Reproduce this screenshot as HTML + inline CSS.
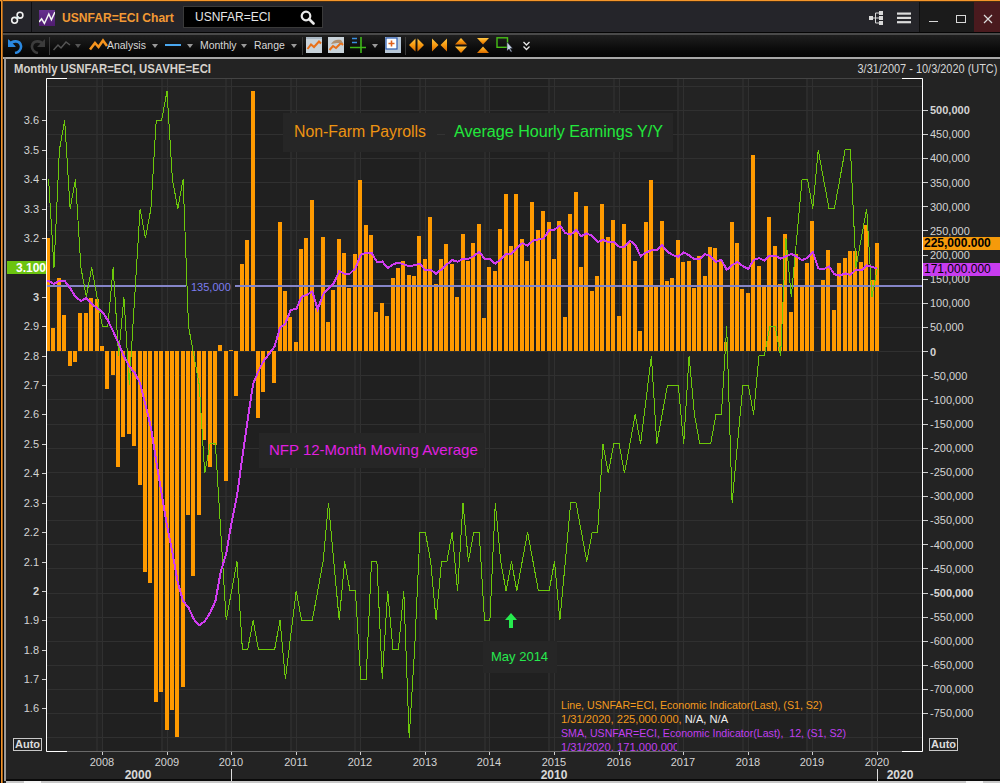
<!DOCTYPE html>
<html><head><meta charset="utf-8">
<style>
*{margin:0;padding:0;box-sizing:border-box}
html,body{width:1000px;height:783px;overflow:hidden;background:#232323;font-family:"Liberation Sans",sans-serif}
.a{position:absolute}
#ob-top{left:0;top:0;width:1000px;height:1px;background:#F5962A}
#ob-top2{left:0;top:1px;width:1000px;height:1px;background:#4a2f14}
#ob-left{left:1px;top:0;width:1px;height:783px;background:#F0922A}
#ob-left2{left:2px;top:0;width:1px;height:783px;background:#a0601c}
#ob-l0{left:0;top:0;width:1px;height:783px;background:#000}
#title{left:3px;top:2px;width:997px;height:30px;background:#25252a}
#tdiv{left:31px;top:2px;width:1px;height:30px;background:#0e0e10}
#wc{left:919px;top:2px;width:55px;height:30px;background:#1b1b1b;border-left:1px solid #0e0e0e}
#wclose{left:974px;top:2px;width:26px;height:30px;background:#4a1a1e}
#tline{left:3px;top:32px;width:997px;height:1px;background:#050505}
#tgray{left:3px;top:33px;width:997px;height:2px;background:#4a4a4a}
#toolbar{left:3px;top:35px;width:997px;height:22px;background:linear-gradient(#1f1f1f,#0c0c0c 60%,#040404)}
#tbot{left:3px;top:57px;width:997px;height:2px;background:#a8a8a8}
#panel{left:3px;top:59px;width:997px;height:722px;background:#232323}
#pl-gray{left:4px;top:57px;width:2px;height:724px;background:#9a9a9a}
#pl-blk{left:3px;top:59px;width:1px;height:724px;background:#000}
#scroll{left:6px;top:781px;width:994px;height:2px;background:#c8c8c8}
#scrollb{left:6px;top:779px;width:994px;height:2px;background:#0a0a0a}
.tt{color:#F39A34;font-weight:bold;font-size:13px;left:62px;top:10px;transform-origin:0 0;transform:scaleX(0.93);white-space:nowrap}
#search{left:183px;top:6px;width:140px;height:22px;background:#000;border:1px solid #3a3a3a}
.st{left:195px;top:10px;font-size:12px;color:#e6e6e6;white-space:nowrap}
.tb{font-size:11px;color:#d8d8d8;top:39px;transform-origin:0 0;transform:scaleX(0.95);white-space:nowrap}
.dd{width:0;height:0;border-left:3.5px solid transparent;border-right:3.5px solid transparent;border-top:4px solid #9a9a9a;top:44px}
.sep{width:1px;height:18px;top:37px;background:#3a3a3a}
.ll{position:absolute;right:961px;font-size:11px;color:#d4d4d4;text-align:right;white-space:nowrap}
.rl{position:absolute;left:930px;font-size:11px;color:#d4d4d4;white-space:nowrap}
.b{font-weight:bold}
.xl{position:absolute;top:756px;width:60px;text-align:center;font-size:11px;color:#d4d4d4}
.dec{position:absolute;top:768px;font-size:12px;font-weight:bold;color:#d8d8d8;width:60px;text-align:center}
.hdr{left:14px;top:62px;font-size:12px;font-weight:bold;color:#d6d2cc;transform-origin:0 0;transform:scaleX(0.945);white-space:nowrap}
.rng{right:3px;top:62px;font-size:12px;color:#d6d6d6;white-space:nowrap;transform-origin:100% 0;transform:scaleX(0.912)}
.auto{font-size:11px;font-weight:bold;color:#dcdcdc;border:1px solid #c8c8c8;padding:0 1px;line-height:11px;height:13px}
.lbox{background:#262626}
.leg{font-size:11px;white-space:nowrap;line-height:14px;transform-origin:0 0;transform:scaleX(0.966)}
</style></head><body>
<div class="a" id="panel"></div>
<div class="a" id="title"></div>
<div class="a" id="tdiv"></div>
<div class="a" id="wc"></div>
<div class="a" id="wclose"></div>
<div class="a" id="tline"></div>
<div class="a" id="tgray"></div>
<div class="a" id="toolbar"></div>
<div class="a" id="tbot"></div>
<div class="a" id="pl-blk"></div>
<div class="a" id="pl-gray"></div>
<div class="a" id="scrollb"></div>
<div class="a" id="scroll"></div>
<div class="a" style="left:24px;top:781px;width:17px;height:2px;background:#f4f4f4"></div>
<div class="a" style="left:966px;top:781px;width:17px;height:2px;background:#f4f4f4"></div>
<div class="a" id="ob-l0"></div>
<div class="a" id="ob-top"></div>
<div class="a" id="ob-top2"></div>
<div class="a" id="ob-left"></div>
<div class="a" id="ob-left2"></div>

<!-- title bar content -->
<svg class="a" style="left:10px;top:10px" width="16" height="16" viewBox="0 0 16 16">
 <g fill="none" stroke="#f2f2f2" stroke-width="1.6">
  <circle cx="4.6" cy="10.3" r="2.9"/><circle cx="10" cy="5.2" r="2.9"/>
 </g>
 <path d="M5.8 9L8.8 6.5" stroke="#d8ecec" stroke-width="1.6"/>
</svg>
<svg class="a" style="left:39px;top:10px" width="16" height="16" viewBox="0 0 16 16">
 <defs><linearGradient id="pg" x1="0" y1="0" x2="0" y2="1"><stop offset="0" stop-color="#66308f"/><stop offset="1" stop-color="#4f1c70"/></linearGradient></defs>
 <rect width="16" height="16" fill="url(#pg)"/>
 <path d="M0 12L2.6 8.9L5.4 13.5L9.8 4L12.4 9.8L16 2" fill="none" stroke="#f4f8f4" stroke-width="1.5"/>
</svg>
<div class="a tt">USNFAR=ECI Chart</div>
<div class="a" id="search"></div>
<div class="a st">USNFAR=ECI</div>
<svg class="a" style="left:300px;top:10px" width="15" height="15" viewBox="0 0 15 15">
 <circle cx="6" cy="6" r="4.3" fill="none" stroke="#e8e8e8" stroke-width="2.2"/>
 <path d="M9 9L13.5 13.5" stroke="#e8e8e8" stroke-width="2.6" stroke-linecap="round"/>
</svg>
<svg class="a" style="left:868px;top:10px" width="16" height="16" viewBox="0 0 16 16">
 <g fill="#d8d8d8"><rect x="1" y="6" width="4" height="4"/><rect x="11" y="1" width="4" height="4"/><rect x="11" y="6" width="4" height="4"/><rect x="11" y="11" width="4" height="4"/></g>
 <path d="M4 8H11M7.5 3V13M7.5 3H11M7.5 13H11" stroke="#d8d8d8" stroke-width="1" fill="none"/>
</svg>
<svg class="a" style="left:897px;top:12px" width="15" height="12" viewBox="0 0 15 12">
 <g fill="#dcdcdc"><rect x="0" y="0.5" width="14" height="2.2"/><rect x="0" y="4.8" width="14" height="2.2"/><rect x="0" y="9.1" width="14" height="2.2"/></g>
</svg>
<div class="a" style="left:929px;top:21px;width:9px;height:1px;background:#d8d8d8"></div>
<div class="a" style="left:956px;top:15px;width:10px;height:8px;border:1px solid #d8d8d8"></div>
<svg class="a" style="left:983px;top:14px" width="10" height="10" viewBox="0 0 10 10"><path d="M1 1L9 9M9 1L1 9" stroke="#dcdcdc" stroke-width="1.2"/></svg>

<!-- toolbar -->
<svg class="a" style="left:6px;top:37px" width="18" height="17" viewBox="0 0 18 17">
 <path d="M3 3V9H9" fill="#2a88e0"/>
 <path d="M4 8C6 3 14 3 15 9C15.5 13 12 15.5 9 16" fill="none" stroke="#2a88e0" stroke-width="2.6"/>
 <path d="M2 2L2 10L10 10Z" fill="#2a88e0"/>
</svg>
<svg class="a" style="left:29px;top:37px" width="18" height="17" viewBox="0 0 18 17">
 <path d="M14 8C12 3 4 3 3 9C2.5 13 6 15.5 9 16" fill="none" stroke="#3c3c3c" stroke-width="2.6"/>
 <path d="M16 2L16 10L8 10Z" fill="#3c3c3c"/>
</svg>
<div class="a sep" style="left:49px"></div>
<svg class="a" style="left:53px;top:39px" width="18" height="12" viewBox="0 0 18 12"><path d="M0.5 11L5 6L8 9L13 3L17 6" fill="none" stroke="#555" stroke-width="1.5"/></svg>
<div class="a dd" style="left:75px;border-top-color:#555"></div>
<svg class="a" style="left:89px;top:38px" width="19" height="13" viewBox="0 0 19 13"><path d="M1 11.5L6 5L9.5 9L14 2.5L18 8" fill="none" stroke="#F5941E" stroke-width="2.6"/></svg>
<div class="a tb" style="left:107px">Analysis</div>
<div class="a dd" style="left:152px"></div>
<div class="a" style="left:165px;top:44px;width:16px;height:2px;background:#4aa8f0"></div>
<div class="a dd" style="left:187px"></div>
<div class="a tb" style="left:200px">Monthly</div>
<div class="a dd" style="left:241px"></div>
<div class="a tb" style="left:254px">Range</div>
<div class="a dd" style="left:291px"></div>
<div class="a sep" style="left:302px"></div>
<svg class="a" style="left:306px;top:37px" width="17" height="16" viewBox="0 0 17 16">
 <rect x="0" y="0" width="16" height="16" fill="#c9d3da"/><rect x="0" y="0" width="16" height="2" fill="#aab8c4"/>
 <path d="M1.5 12L5 7.5L8 10L13 4.5L15 6.5" fill="none" stroke="#E8701A" stroke-width="2"/>
</svg>
<svg class="a" style="left:328px;top:37px" width="17" height="16" viewBox="0 0 17 16">
 <rect x="0" y="0" width="16" height="16" fill="#c9d3da"/>
 <path d="M1.5 13L5 9L8 11L13 6L15 8" fill="none" stroke="#E8701A" stroke-width="2"/>
 <path d="M3 7C5 3 9 2 13 3L15 6L9 6Z" fill="#b09070"/>
</svg>
<svg class="a" style="left:349px;top:37px" width="18" height="16" viewBox="0 0 18 16">
 <path d="M1 10.5H17M12 0V16" stroke="#3fb81a" stroke-width="1.6"/>
 <path d="M3 1.5H8M3 5.5H8" stroke="#3a8fe0" stroke-width="1.4"/>
</svg>
<div class="a dd" style="left:372px"></div>
<svg class="a" style="left:385px;top:37px" width="17" height="16" viewBox="0 0 17 16">
 <rect x="0" y="0" width="16" height="16" fill="#b8c8d8"/><rect x="1" y="1" width="11" height="11" fill="#fff" stroke="#2a5ab0" stroke-width="1.2"/>
 <path d="M6.5 3.5V9.5M3.5 6.5H9.5" stroke="#E0601A" stroke-width="1.6"/>
</svg>
<div class="a sep" style="left:405px"></div>
<svg class="a" style="left:0;top:0" width="0" height="0"><defs><linearGradient id="og" x1="0" y1="0" x2="0" y2="1"><stop offset="0" stop-color="#FFC848"/><stop offset="0.5" stop-color="#F89A10"/><stop offset="1" stop-color="#D86A00"/></linearGradient></defs></svg>
<svg class="a" style="left:408px;top:38px" width="17" height="14" viewBox="0 0 17 14"><path d="M1 7L7.5 0.5V13.5Z M16 7L9.5 0.5V13.5Z" fill="url(#og)"/></svg>
<svg class="a" style="left:431px;top:38px" width="17" height="14" viewBox="0 0 17 14"><path d="M7.5 7L1 0.5V13.5Z M9.5 7L16 0.5V13.5Z" fill="url(#og)"/></svg>
<svg class="a" style="left:454px;top:37px" width="14" height="17" viewBox="0 0 14 17"><path d="M7 1L13 7.5H1Z" fill="url(#og)"/><path d="M1 9.5H13L7 16Z" fill="url(#og)"/></svg>
<svg class="a" style="left:476px;top:37px" width="14" height="17" viewBox="0 0 14 17"><path d="M7 7.5L13 1H1Z" fill="url(#og)"/><path d="M7 9.5L13 16H1Z" fill="url(#og)"/></svg>
<svg class="a" style="left:496px;top:37px" width="17" height="16" viewBox="0 0 17 16">
 <rect x="1" y="0.8" width="10.5" height="9.5" fill="none" stroke="#48c018" stroke-width="1.4"/>
 <path d="M11 5V14L13 12L15 15L16 14.5L14.2 11.5L16.5 11.3Z" fill="#c8d8e8" stroke="#223" stroke-width="0.5"/>
</svg>
<svg class="a" style="left:523px;top:41px" width="7" height="10" viewBox="0 0 7 10"><path d="M0.5 1L3.5 4L6.5 1M0.5 5.5L3.5 8.5L6.5 5.5" fill="none" stroke="#e8e8e8" stroke-width="1.3"/></svg>

<!-- chart header -->
<div class="a hdr">Monthly USNFAR=ECI, USAVHE=ECI</div>
<div class="a rng">3/31/2007 - 10/3/2020 (UTC)</div>

<svg width="1000" height="783" style="position:absolute;left:0;top:0">
<defs><clipPath id="pc"><rect x="46" y="78" width="876" height="673"/></clipPath></defs>
<path d="M103 78H161V751H103ZM232 78H290V751H232ZM361 78H419V751H361ZM490 78H548V751H490ZM620 78H677V751H620ZM749 78H806V751H749ZM878 78H922V751H878Z" fill="#202020"/>
<path d="M97 78V751M162 78V751M226 78V751M291 78V751M355 78V751M420 78V751M485 78V751M549 78V751M614 78V751M678 78V751M743 78V751M807 78V751M872 78V751" stroke="#2b2b2b" stroke-width="2" fill="none"/>
<path d="M46 737.5H922M46 713.5H922M46 689.5H922M46 665.5H922M46 641.5H922M46 617.5H922M46 593.5H922M46 568.5H922M46 544.5H922M46 520.5H922M46 496.5H922M46 472.5H922M46 448.5H922M46 424.5H922M46 399.5H922M46 375.5H922M46 351.5H922M46 327.5H922M46 303.5H922M46 279.5H922M46 255.5H922M46 230.5H922M46 206.5H922M46 182.5H922M46 158.5H922M46 134.5H922M46 110.5H922M46 86.5H922M102.5 78V751M167.5 78V751M231.5 78V751M296.5 78V751M360.5 78V751M425.5 78V751M489.5 78V751M554.5 78V751M619.5 78V751M683.5 78V751M748.5 78V751M812.5 78V751M877.5 78V751" stroke="#303030" stroke-width="1" fill="none"/>
<g clip-path="url(#pc)">
<path d="M46 238h4V351h-4ZM51 328h4V351h-4ZM57 278h4V351h-4ZM62 315h4V351h-4ZM68 351h4V366h-4ZM73 351h4V362h-4ZM78 313h4V351h-4ZM84 313h4V351h-4ZM89 298h4V351h-4ZM95 299h4V351h-4ZM100 346h4V351h-4ZM105 351h4V389h-4ZM111 351h4V375h-4ZM116 351h4V467h-4ZM121 351h4V437h-4ZM127 351h4V434h-4ZM132 351h4V446h-4ZM138 351h4V485h-4ZM143 351h4V572h-4ZM148 351h4V583h-4ZM154 351h4V702h-4ZM159 351h4V692h-4ZM165 351h4V730h-4ZM170 351h4V710h-4ZM175 351h4V737h-4ZM181 351h4V687h-4ZM186 351h4V515h-4ZM191 351h4V576h-4ZM197 351h4V515h-4ZM202 351h4V440h-4ZM208 351h4V467h-4ZM213 351h4V445h-4ZM218 345h4V351h-4ZM224 351h4V481h-4ZM229 350h4V351h-4ZM234 351h4V396h-4ZM240 264h4V351h-4ZM245 240h4V351h-4ZM251 91h4V351h-4ZM256 351h4V418h-4ZM261 351h4V392h-4ZM267 351h4V354h-4ZM272 351h4V383h-4ZM278 222h4V351h-4ZM283 291h4V351h-4ZM288 317h4V351h-4ZM294 342h4V351h-4ZM299 249h4V351h-4ZM304 238h4V351h-4ZM310 200h4V351h-4ZM315 308h4V351h-4ZM321 237h4V351h-4ZM326 322h4V351h-4ZM331 290h4V351h-4ZM337 239h4V351h-4ZM342 253h4V351h-4ZM347 288h4V351h-4ZM353 254h4V351h-4ZM358 180h4V351h-4ZM364 225h4V351h-4ZM369 235h4V351h-4ZM374 312h4V351h-4ZM380 303h4V351h-4ZM385 316h4V351h-4ZM391 278h4V351h-4ZM396 268h4V351h-4ZM401 261h4V351h-4ZM407 275h4V351h-4ZM412 276h4V351h-4ZM417 236h4V351h-4ZM423 259h4V351h-4ZM428 217h4V351h-4ZM434 284h4V351h-4ZM439 259h4V351h-4ZM444 244h4V351h-4ZM450 264h4V351h-4ZM455 297h4V351h-4ZM461 234h4V351h-4ZM466 261h4V351h-4ZM471 243h4V351h-4ZM477 224h4V351h-4ZM482 318h4V351h-4ZM487 267h4V351h-4ZM493 271h4V351h-4ZM498 229h4V351h-4ZM504 194h4V351h-4ZM509 246h4V351h-4ZM514 194h4V351h-4ZM520 239h4V351h-4ZM525 261h4V351h-4ZM530 202h4V351h-4ZM536 230h4V351h-4ZM541 211h4V351h-4ZM547 222h4V351h-4ZM552 259h4V351h-4ZM557 221h4V351h-4ZM563 317h4V351h-4ZM568 214h4V351h-4ZM574 192h4V351h-4ZM579 267h4V351h-4ZM584 206h4V351h-4ZM590 291h4V351h-4ZM595 276h4V351h-4ZM600 204h4V351h-4ZM606 237h4V351h-4ZM611 220h4V351h-4ZM617 316h4V351h-4ZM622 224h4V351h-4ZM627 243h4V351h-4ZM633 261h4V351h-4ZM638 331h4V351h-4ZM644 222h4V351h-4ZM649 180h4V351h-4ZM654 285h4V351h-4ZM660 221h4V351h-4ZM665 281h4V351h-4ZM670 278h4V351h-4ZM676 240h4V351h-4ZM681 262h4V351h-4ZM687 261h4V351h-4ZM692 288h4V351h-4ZM697 256h4V351h-4ZM703 276h4V351h-4ZM708 247h4V351h-4ZM713 248h4V351h-4ZM719 261h4V351h-4ZM724 342h4V351h-4ZM730 222h4V351h-4ZM735 243h4V351h-4ZM740 289h4V351h-4ZM746 293h4V351h-4ZM751 155h4V351h-4ZM757 266h4V351h-4ZM762 285h4V351h-4ZM767 217h4V351h-4ZM773 246h4V351h-4ZM778 284h4V351h-4ZM783 234h4V351h-4ZM789 312h4V351h-4ZM794 254h4V351h-4ZM800 285h4V351h-4ZM805 263h4V351h-4ZM810 221h4V351h-4ZM821 280h4V351h-4ZM826 250h4V351h-4ZM832 310h4V351h-4ZM837 263h4V351h-4ZM843 258h4V351h-4ZM848 251h4V351h-4ZM853 251h4V351h-4ZM859 262h4V351h-4ZM864 225h4V351h-4ZM870 280h4V351h-4ZM875 243h4V351h-4Z" fill="#FF9A00"/>
<path d="M46 286H186M235 286H922" stroke="#8585C8" stroke-width="2"/>
<polyline points="48.6,179.3 54.0,267.5 59.4,149.9 64.7,120.5 70.1,208.7 75.5,179.3 80.9,267.5 86.3,296.9 91.7,267.5 97.0,296.9 102.4,326.3 107.8,326.3 113.2,267.5 118.6,355.7 123.9,296.9 129.3,385.1 134.7,296.9 140.1,208.7 145.5,238.1 150.9,208.7 156.2,120.5 161.6,120.5 167.0,91.1 172.4,179.3 177.8,208.7 183.1,179.3 188.5,326.3 193.9,355.7 199.3,385.1 204.7,473.3 210.1,443.9 215.4,443.9 220.8,532.1 226.2,620.3 231.6,590.9 237.0,561.5 242.4,649.7 247.7,649.7 253.1,620.3 258.5,649.7 263.9,649.7 269.3,649.7 274.6,649.7 280.0,620.3 285.4,679.1 290.8,635.0 296.2,590.9 301.6,620.3 306.9,620.3 312.3,620.3 317.7,590.9 323.1,561.5 328.5,502.7 333.8,561.5 339.2,620.3 344.6,561.5 350.0,590.9 355.4,590.9 360.8,679.1 366.1,679.1 371.5,561.5 376.9,561.5 382.3,679.1 387.7,590.9 393.0,649.7 398.4,649.7 403.8,590.9 409.2,737.9 414.6,649.7 420.0,532.1 425.3,532.1 430.7,561.5 436.1,620.3 441.5,561.5 446.9,561.5 452.2,532.1 457.6,590.9 463.0,502.7 468.4,561.5 473.8,532.1 479.2,532.1 484.5,620.3 489.9,620.3 495.3,502.7 500.7,561.5 506.1,590.9 511.5,561.5 516.8,590.9 522.2,561.5 527.6,532.1 533.0,561.5 538.4,590.9 543.7,590.9 549.1,590.9 554.5,561.5 559.9,620.3 565.3,561.5 570.7,502.7 576.0,502.7 581.4,532.1 586.8,561.5 592.2,532.1 597.6,532.1 602.9,443.9 608.3,473.3 613.7,443.9 619.1,443.9 624.5,473.3 629.9,443.9 635.2,414.5 640.6,443.9 646.0,399.8 651.4,355.7 656.8,443.9 662.1,414.5 667.5,385.1 672.9,385.1 678.3,385.1 683.7,443.9 689.1,355.7 694.4,414.5 699.8,443.9 705.2,443.9 710.6,443.9 716.0,414.5 721.4,414.5 726.7,326.3 732.1,502.7 737.5,443.9 742.9,385.1 748.3,385.1 753.6,414.5 759.0,355.7 764.4,355.7 769.8,326.3 775.2,326.3 780.6,355.7 785.9,238.1 791.3,296.9 796.7,238.1 802.1,179.3 807.5,179.3 812.8,208.7 818.2,149.9 823.6,179.3 829.0,208.7 834.4,208.7 839.8,179.3 845.1,149.9 850.5,149.9 855.9,267.5 861.3,238.1 866.7,208.7 872.0,296.9 877.4,267.5" fill="none" stroke="#6CC80A" stroke-width="1" shape-rendering="crispEdges"/>
<polyline points="46,281.0 48.6,281.0 54.0,284.0 59.4,280.5 64.7,281.0 70.1,288.0 75.5,297.0 80.9,301.0 86.3,298.0 91.7,304.0 97.0,308.0 102.4,312.0 107.8,320.2 113.2,331.6 118.6,343.2 123.9,356.4 129.3,366.3 134.7,372.9 140.1,383.2 145.5,404.8 150.9,427.3 156.2,461.0 161.6,493.8 167.0,525.8 172.4,552.5 177.8,582.7 183.1,601.0 188.5,607.6 193.9,619.4 199.3,625.2 204.7,621.4 210.1,612.7 215.4,601.2 220.8,571.4 226.2,553.8 231.6,522.2 237.0,496.0 242.4,456.6 247.7,419.4 253.1,384.0 258.5,370.9 263.9,360.6 269.3,353.6 274.6,346.5 280.0,327.9 285.4,323.5 290.8,309.8 296.2,309.2 301.6,296.9 306.9,294.8 312.3,291.4 317.7,309.5 323.1,294.4 328.5,288.6 333.8,283.2 339.2,271.2 344.6,273.8 350.0,273.5 355.4,268.3 360.8,254.8 366.1,252.8 371.5,252.6 376.9,261.9 382.3,261.5 387.7,268.1 393.0,264.4 398.4,262.6 403.8,264.4 409.2,266.2 414.6,265.2 420.0,263.8 425.3,270.3 430.7,269.7 436.1,273.8 441.5,269.3 446.9,264.4 452.2,260.1 457.6,261.7 463.0,258.8 468.4,258.8 473.8,256.2 479.2,251.8 484.5,258.7 489.9,259.3 495.3,263.8 500.7,259.2 506.1,253.8 511.5,254.0 516.8,248.1 522.2,243.3 527.6,245.5 533.0,240.6 538.4,239.5 543.7,238.4 549.1,230.4 554.5,229.7 559.9,225.6 565.3,232.9 570.7,234.6 576.0,230.1 581.4,236.2 586.8,233.4 592.2,235.9 597.6,242.1 602.9,239.9 608.3,242.1 613.7,241.9 619.1,246.7 624.5,246.9 629.9,240.8 635.2,244.7 640.6,256.3 646.0,252.5 651.4,250.4 656.8,249.9 662.1,245.3 667.5,251.8 672.9,255.1 678.3,256.8 683.7,252.3 689.1,255.3 694.4,259.1 699.8,258.7 705.2,254.1 710.6,256.2 716.0,261.8 721.4,259.8 726.7,269.9 732.1,265.0 737.5,262.1 742.9,266.2 748.3,268.8 753.6,260.0 759.0,258.1 764.4,260.5 769.8,255.6 775.2,255.6 780.6,258.6 785.9,256.4 791.3,253.9 796.7,256.6 802.1,260.1 807.5,257.9 812.8,251.9 818.2,268.3 823.6,269.4 829.0,266.5 834.4,274.2 839.8,275.6 845.1,273.4 850.5,274.8 855.9,269.7 861.3,270.4 866.7,265.4 872.0,266.8 877.4,268.7" fill="none" stroke="#D03CF0" stroke-width="2" shape-rendering="crispEdges"/>
</g>
<path d="M46.5 78V751.5H922.5V78" stroke="#6a6a6a" stroke-width="1" fill="none"/>
<path d="M46.5 78.5H922" stroke="#444" stroke-width="1" fill="none"/>
<path d="M67 78.5H46.5V751.5H67M902 78.5H922.5V751.5H902" stroke="#fff" stroke-width="1" fill="none"/>
<path d="M42 708.5H46M42 679.5H46M42 650.5H46M42 620.5H46M42 591.5H46M42 562.5H46M42 532.5H46M42 503.5H46M42 473.5H46M42 444.5H46M42 414.5H46M42 385.5H46M42 356.5H46M42 326.5H46M42 297.5H46M42 268.5H46M42 238.5H46M42 209.5H46M42 179.5H46M42 150.5H46M42 120.5H46M923 713.5H928M923 689.5H928M923 665.5H928M923 641.5H928M923 617.5H928M923 593.5H928M923 568.5H928M923 544.5H928M923 520.5H928M923 496.5H928M923 472.5H928M923 448.5H928M923 424.5H928M923 399.5H928M923 375.5H928M923 351.5H928M923 327.5H928M923 303.5H928M923 279.5H928M923 255.5H928M923 230.5H928M923 206.5H928M923 182.5H928M923 158.5H928M923 134.5H928M923 110.5H928M102.5 752V755M167.5 752V755M231.5 752V755M296.5 752V755M360.5 752V755M425.5 752V755M489.5 752V755M554.5 752V755M619.5 752V755M683.5 752V755M748.5 752V755M812.5 752V755M877.5 752V755" stroke="#cfcfcf" stroke-width="1" fill="none"/>
<path d="M231.5 769V781M877.5 769V781" stroke="#ddd" stroke-width="1"/>
</svg>

<!-- plot labels -->
<div class="a lbox" style="left:283px;top:113px;width:390px;height:39px"></div>
<div class="a" style="left:294px;top:123px;font-size:16px;color:#EE9412;white-space:nowrap;transform-origin:0 0;transform:scaleX(0.99)">Non-Farm Payrolls</div>
<div class="a" style="left:437px;top:134px;width:8px;height:1px;background:#333"></div>
<div class="a" style="left:454px;top:123px;font-size:16px;color:#22E83C;white-space:nowrap;transform-origin:0 0;transform:scaleX(1.007)">Average Hourly Earnings Y/Y</div>
<div class="a lbox" style="left:259px;top:433px;width:226px;height:35px"></div>
<div class="a" style="left:269px;top:441px;font-size:15px;color:#E020E0">NFP 12-Month Moving Average</div>
<div class="a lbox" style="left:483px;top:641px;width:74px;height:32px"></div>
<div class="a" style="left:491px;top:649px;font-size:13px;color:#26EA4E;white-space:nowrap">May 2014</div>
<svg class="a" style="left:504px;top:612px" width="14" height="17" viewBox="0 0 14 17"><path d="M7 1L13 8H9V16H5V8H1Z" fill="#26EA4E"/></svg>
<div class="a" style="left:191px;top:281px;font-size:11px;color:#7C7CF0">135,000</div>

<div class="a leg" style="left:561px;top:698px;color:#F39A1E">Line, USNFAR=ECI, Economic Indicator(Last), (S1, S2)</div>
<div class="a leg" style="left:561px;top:712px;color:#F39A1E;transform:scaleX(1.012)">1/31/2020, 225,000.000, <span style="color:#eee">N/A, N/A</span></div>
<div class="a leg" style="left:561px;top:726px;color:#C040F0">SMA, USNFAR=ECI, Economic Indicator(Last), &nbsp;12, (S1, S2)</div>
<div class="a" style="left:561px;top:740px;height:11px;overflow:hidden"><div class="leg" style="color:#C040F0;transform:scaleX(1.018)">1/31/2020, 171,000.000</div></div>

<div class="ll" style="top:702px">1.6</div>
<div class="ll" style="top:673px">1.7</div>
<div class="ll" style="top:644px">1.8</div>
<div class="ll" style="top:614px">1.9</div>
<div class="ll b" style="top:585px">2</div>
<div class="ll" style="top:556px">2.1</div>
<div class="ll" style="top:526px">2.2</div>
<div class="ll" style="top:497px">2.3</div>
<div class="ll" style="top:467px">2.4</div>
<div class="ll" style="top:438px">2.5</div>
<div class="ll" style="top:408px">2.6</div>
<div class="ll" style="top:379px">2.7</div>
<div class="ll" style="top:350px">2.8</div>
<div class="ll" style="top:320px">2.9</div>
<div class="ll b" style="top:291px">3</div>
<div class="ll" style="top:232px">3.2</div>
<div class="ll" style="top:203px">3.3</div>
<div class="ll" style="top:173px">3.4</div>
<div class="ll" style="top:144px">3.5</div>
<div class="ll" style="top:114px">3.6</div>
<div class="rl" style="top:707px">-750,000</div>
<div class="rl" style="top:683px">-700,000</div>
<div class="rl" style="top:659px">-650,000</div>
<div class="rl" style="top:635px">-600,000</div>
<div class="rl" style="top:611px">-550,000</div>
<div class="rl b" style="top:587px">-500,000</div>
<div class="rl" style="top:563px">-450,000</div>
<div class="rl" style="top:539px">-400,000</div>
<div class="rl" style="top:514px">-350,000</div>
<div class="rl" style="top:490px">-300,000</div>
<div class="rl" style="top:466px">-250,000</div>
<div class="rl" style="top:442px">-200,000</div>
<div class="rl" style="top:418px">-150,000</div>
<div class="rl" style="top:394px">-100,000</div>
<div class="rl" style="top:370px">-50,000</div>
<div class="rl b" style="top:346px">0</div>
<div class="rl" style="top:321px">50,000</div>
<div class="rl" style="top:297px">100,000</div>
<div class="rl" style="top:273px">150,000</div>
<div class="rl" style="top:249px">200,000</div>
<div class="rl" style="top:225px">250,000</div>
<div class="rl" style="top:201px">300,000</div>
<div class="rl" style="top:177px">350,000</div>
<div class="rl" style="top:152px">400,000</div>
<div class="rl" style="top:128px">450,000</div>
<div class="rl b" style="top:104px">500,000</div>
<div class="xl" style="left:72px">2008</div>
<div class="xl" style="left:137px">2009</div>
<div class="xl" style="left:201px">2010</div>
<div class="xl" style="left:266px">2011</div>
<div class="xl" style="left:330px">2012</div>
<div class="xl" style="left:395px">2013</div>
<div class="xl" style="left:459px">2014</div>
<div class="xl" style="left:524px">2015</div>
<div class="xl" style="left:589px">2016</div>
<div class="xl" style="left:653px">2017</div>
<div class="xl" style="left:718px">2018</div>
<div class="xl" style="left:782px">2019</div>
<div class="xl" style="left:847px">2020</div>
<div class="a" style="left:7px;top:261px;width:39px;height:13px;background:#6cc410"></div>
<div class="a" style="left:7px;top:261px;width:39px;text-align:right;font-size:12px;font-weight:bold;color:#fff">3.100</div>
<div class="a" style="left:923px;top:237px;width:77px;height:13px;background:#F59A0A"></div>
<div class="a" style="left:924px;top:236px;font-size:12px;font-weight:bold;color:#000">225,000.000</div>
<div class="a" style="left:923px;top:263px;width:77px;height:13px;background:#C83CF0"></div>
<div class="a" style="left:924px;top:262px;font-size:12px;color:#000">171,000.000</div>
<div class="a auto" style="left:13px;top:738px">Auto</div>
<div class="a auto" style="left:929px;top:738px">Auto</div>
<div class="dec" style="left:108px">2000</div>
<div class="dec" style="left:524px">2010</div>
<div class="dec" style="left:870px">2020</div>
</body></html>
